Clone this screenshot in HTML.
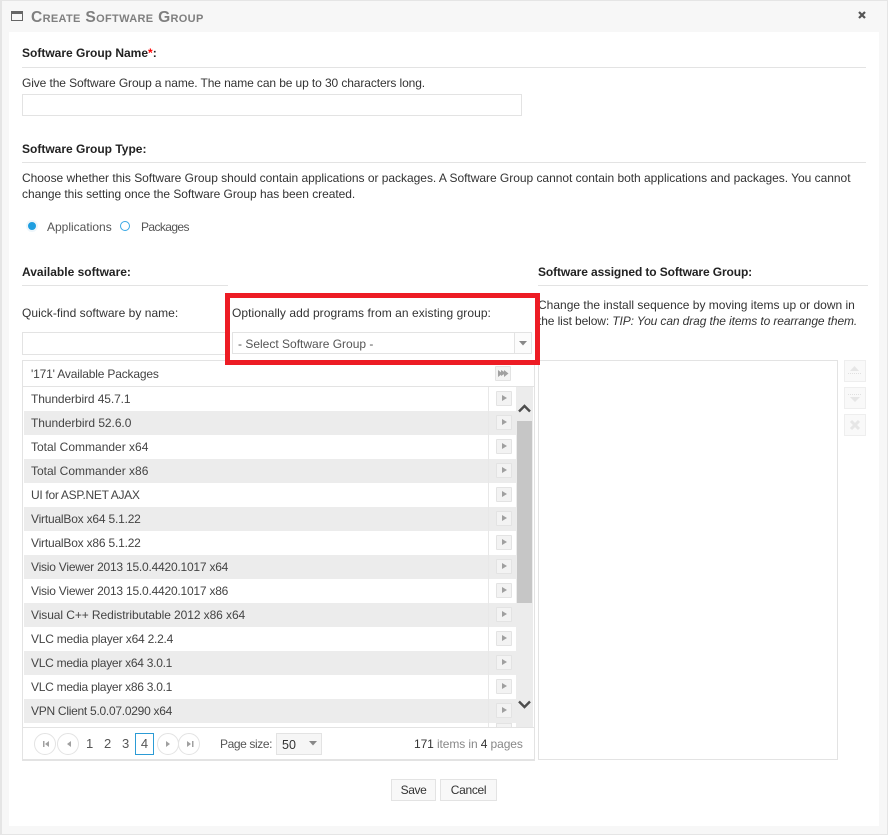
<!DOCTYPE html>
<html><head><meta charset="utf-8"><style>
html,body{margin:0;padding:0}
body{width:888px;height:835px;position:relative;overflow:hidden;background:#fff;font:12px/16px "Liberation Sans",sans-serif;color:#333}
div{position:absolute;box-sizing:border-box}
.t{white-space:nowrap;height:16px}
.b{font-weight:bold;color:#222}
.l{height:1px;background:#e3e3e3}
.row{left:24px;width:492px;height:24px;line-height:24px;padding-left:7px;white-space:nowrap;color:#444}
.g{background:#ececec}
.btn{left:496px;width:16px;height:15px;background:#f3f3f3;border:1px solid #e3e3e3;border-radius:1px;overflow:hidden}
.btn:after{content:"";position:absolute;left:5px;top:3px;border-left:5px solid #a0a0a0;border-top:3.5px solid transparent;border-bottom:3.5px solid transparent}
.c{width:22px;height:22px;top:733px;border:1px solid #e3e3e3;border-radius:50%;background:#fff}
.s{left:844px;width:22px;height:22px;background:#f9f9f9;border:1px solid #eee}
</style></head><body>
<div style="left:0;top:0;width:888px;height:835px;background:#f7f7f7;border:1px solid #e5e5e5;border-width:1px 1px 1px 2px"></div>
<div style="left:9px;top:32px;width:870px;height:794px;background:#fff"></div>
<svg style="position:absolute;left:11px;top:11px" width="13" height="11"><rect x=".5" y=".5" width="11" height="9" fill="none" stroke="#666"/><rect x="1" y="1" width="10" height="2" fill="#666"/></svg>
<div class="t" style="left:31px;top:10px;font-size:15.6px;font-variant:small-caps;font-weight:bold;color:#7f7f7f;letter-spacing:.33px">Create Software Group</div>
<svg style="position:absolute;left:857px;top:10px" width="11" height="11"><path d="M2 2l6 6M8 2l-6 6" stroke="#555" stroke-width="2.2" fill="none"/></svg>

<div class="t b" style="left:22px;top:45px">Software Group Name<span style="color:#f00">*</span>:</div>
<div class="l" style="left:22px;top:67px;width:844px"></div>
<div class="t" style="left:22px;top:75px;letter-spacing:-.105px">Give the Software Group a name. The name can be up to 30 characters long.</div>
<div style="left:22px;top:94px;width:500px;height:22px;border:1px solid #e3e3e3;background:#fff"></div>

<div class="t b" style="left:22px;top:141px">Software Group Type:</div>
<div class="l" style="left:22px;top:162px;width:844px"></div>
<div class="t" style="left:22px;top:170px;letter-spacing:-.027px">Choose whether this Software Group should contain applications or packages. A Software Group cannot contain both applications and packages. You cannot</div>
<div class="t" style="left:22px;top:186px;letter-spacing:-.05px">change this setting once the Software Group has been created.</div>
<div style="left:26px;top:220px;width:12px;height:12px;border-radius:50%;background:#1e9ee0;border:2px solid #eef6fb"></div>
<div class="t" style="left:47px;top:219px;color:#555">Applications</div>
<div style="left:120px;top:221px;width:10px;height:10px;border-radius:50%;background:#fff;border:1.5px solid #3aa8e4"></div>
<div class="t" style="left:141px;top:219px;color:#555;letter-spacing:-.6px">Packages</div>

<div class="t b" style="left:22px;top:264px">Available software:</div>
<div class="l" style="left:22px;top:285px;width:206px"></div>
<div class="t b" style="left:538px;top:264px;letter-spacing:-.11px">Software assigned to Software Group:</div>
<div class="l" style="left:538px;top:285px;width:330px"></div>
<div class="t" style="left:22px;top:305px;letter-spacing:.03px">Quick-find software by name:</div>
<div class="t" style="left:538px;top:297px;letter-spacing:0">Change the install sequence by moving items up or down in</div>
<div class="t" style="left:538px;top:313px;letter-spacing:-.11px">the list below: <i>TIP: You can drag the items to rearrange them.</i></div>

<div style="left:22px;top:332px;width:210px;height:23px;border:1px solid #e3e3e3;background:#fff"></div>

<div style="left:22px;top:360px;width:513px;height:401px;border:1px solid #e3e3e3;border-bottom-width:2px;background:#fff"></div>
<div class="t" style="left:31px;top:366px;color:#444;letter-spacing:-.17px">'171' Available Packages</div>
<div class="btn" style="left:495px;top:366px"></div>
<svg style="position:absolute;left:498px;top:370px" width="11" height="7"><path d="M0 0l4.500 3.500-4.500 3.500zM6 0l4.500 3.500-4.500 3.500z" fill="#a0a0a0"/></svg>
<div class="l" style="left:23px;top:386px;width:511px"></div>

<div class="row" style="top:387px;letter-spacing:-.11px">Thunderbird 45.7.1</div>
<div class="row g" style="top:411px;letter-spacing:-.06px">Thunderbird 52.6.0</div>
<div class="row" style="top:435px">Total Commander x64</div>
<div class="row g" style="top:459px">Total Commander x86</div>
<div class="row" style="top:483px;letter-spacing:-.3px">UI for ASP.NET AJAX</div>
<div class="row g" style="top:507px;letter-spacing:-.2px">VirtualBox x64 5.1.22</div>
<div class="row" style="top:531px;letter-spacing:-.2px">VirtualBox x86 5.1.22</div>
<div class="row g" style="top:555px;letter-spacing:-.22px">Visio Viewer 2013 15.0.4420.1017 x64</div>
<div class="row" style="top:579px;letter-spacing:-.22px">Visio Viewer 2013 15.0.4420.1017 x86</div>
<div class="row g" style="top:603px;letter-spacing:-.08px">Visual C++ Redistributable 2012 x86 x64</div>
<div class="row" style="top:627px;letter-spacing:-.23px">VLC media player x64 2.2.4</div>
<div class="row g" style="top:651px;letter-spacing:-.27px">VLC media player x64 3.0.1</div>
<div class="row" style="top:675px;letter-spacing:-.27px">VLC media player x86 3.0.1</div>
<div class="row g" style="top:699px;letter-spacing:-.27px">VPN Client 5.0.07.0290 x64</div>

<div style="left:488px;top:387px;width:1px;height:340px;background:#e8e8e8"></div>
<div class="btn" style="top:391px"></div><div class="btn" style="top:415px"></div><div class="btn" style="top:439px"></div><div class="btn" style="top:463px"></div><div class="btn" style="top:487px"></div><div class="btn" style="top:511px"></div><div class="btn" style="top:535px"></div><div class="btn" style="top:559px"></div><div class="btn" style="top:583px"></div><div class="btn" style="top:607px"></div><div class="btn" style="top:631px"></div><div class="btn" style="top:655px"></div><div class="btn" style="top:679px"></div><div class="btn" style="top:703px"></div>
<div style="left:496px;top:723px;width:16px;height:4px;background:#f3f3f3;border:1px solid #e3e3e3;border-bottom:0"></div>

<div style="left:516px;top:387px;width:17px;height:340px;background:#ececec"></div>
<div style="left:517px;top:421px;width:15px;height:182px;background:#c6c6c6"></div>
<svg style="position:absolute;left:518px;top:404px" width="13" height="9"><path d="M1 7.500l5.500-5.500 5.500 5.500" fill="none" stroke="#4d4d4d" stroke-width="2.400"/></svg>
<svg style="position:absolute;left:518px;top:700px" width="13" height="9"><path d="M1 1.500l5.500 5.500 5.500-5.500" fill="none" stroke="#4d4d4d" stroke-width="2.400"/></svg>
<div class="l" style="left:23px;top:727px;width:511px"></div>

<div class="c" style="left:34px"></div><div class="c" style="left:57px"></div><div class="c" style="left:157px"></div><div class="c" style="left:178px"></div>
<svg style="position:absolute;left:34px;top:733px" width="170" height="22" fill="#a0a0a0"><path d="M9 8h1.500v6H9zM15 8v6l-4-3zM37 8v6l-4-3zM132 8v6l4-3zM153 8v6l4-3zM158 8h1.500v6H158z"/></svg>
<div class="t" style="left:86px;top:736px;font-size:13px;color:#555">1</div>
<div class="t" style="left:104px;top:736px;font-size:13px;color:#555">2</div>
<div class="t" style="left:122px;top:736px;font-size:13px;color:#555">3</div>
<div style="left:135px;top:733px;width:19px;height:22px;border:1px solid #2b9bd5;text-align:center;line-height:20px;font-size:13px;color:#555">4</div>
<div class="t" style="left:220px;top:736px;color:#555;letter-spacing:-.4px">Page size:</div>
<div style="left:276px;top:733px;width:46px;height:22px;background:#f6f6f6;border:1px solid #e3e3e3;padding-left:5px;line-height:22px;font-size:12.5px">50</div>
<svg style="position:absolute;left:309px;top:741px" width="9" height="5"><path d="M0 0h8L4 4.500z" fill="#888"/></svg>
<div class="t" style="left:414px;top:736px;color:#888;letter-spacing:-.1px"><span style="color:#333">171</span> items in <span style="color:#333">4</span> pages</div>

<div style="left:538px;top:360px;width:300px;height:400px;border:1px solid #e3e3e3;background:#fff"></div>
<div class="s" style="top:360px"></div><div class="s" style="top:387px"></div><div class="s" style="top:414px"></div>
<svg style="position:absolute;left:844px;top:360px" width="22" height="80" fill="#e6e6e6"><path d="M6 11l4.500-5 4.500 5zM6 37h10l-5 5z"/><path d="M4 13.500h14M4 34.500h14" stroke="#e0e0e0" stroke-dasharray="1 1"/><path d="M7 61l8 8M15 61l-8 8" stroke="#e6e6e6" stroke-width="3"/></svg>

<div style="left:225px;top:293px;width:315px;height:72px;border:5px solid #ed1c24;background:#fff"></div>
<div class="t" style="left:232px;top:305px;letter-spacing:.06px">Optionally add programs from an existing group:</div>
<div style="left:232px;top:332px;width:300px;height:22px;border:1px solid #e3e3e3;background:#fff"></div>
<div style="left:514px;top:333px;width:17px;height:20px;border-left:1px solid #e3e3e3;background:#fcfcfc"></div>
<svg style="position:absolute;left:519px;top:341px" width="9" height="5"><path d="M0 0h8L4 4.500z" fill="#888"/></svg>
<div class="t" style="left:238px;top:336px;color:#555">- Select Software Group -</div>

<div style="left:391px;top:779px;width:45px;height:22px;background:#f8f8f8;border:1px solid #e3e3e3;text-align:center;line-height:21px;color:#333;letter-spacing:-.4px">Save</div>
<div style="left:440px;top:779px;width:57px;height:22px;background:#f8f8f8;border:1px solid #e3e3e3;text-align:center;line-height:21px;color:#333;letter-spacing:-.3px">Cancel</div>
</body></html>
